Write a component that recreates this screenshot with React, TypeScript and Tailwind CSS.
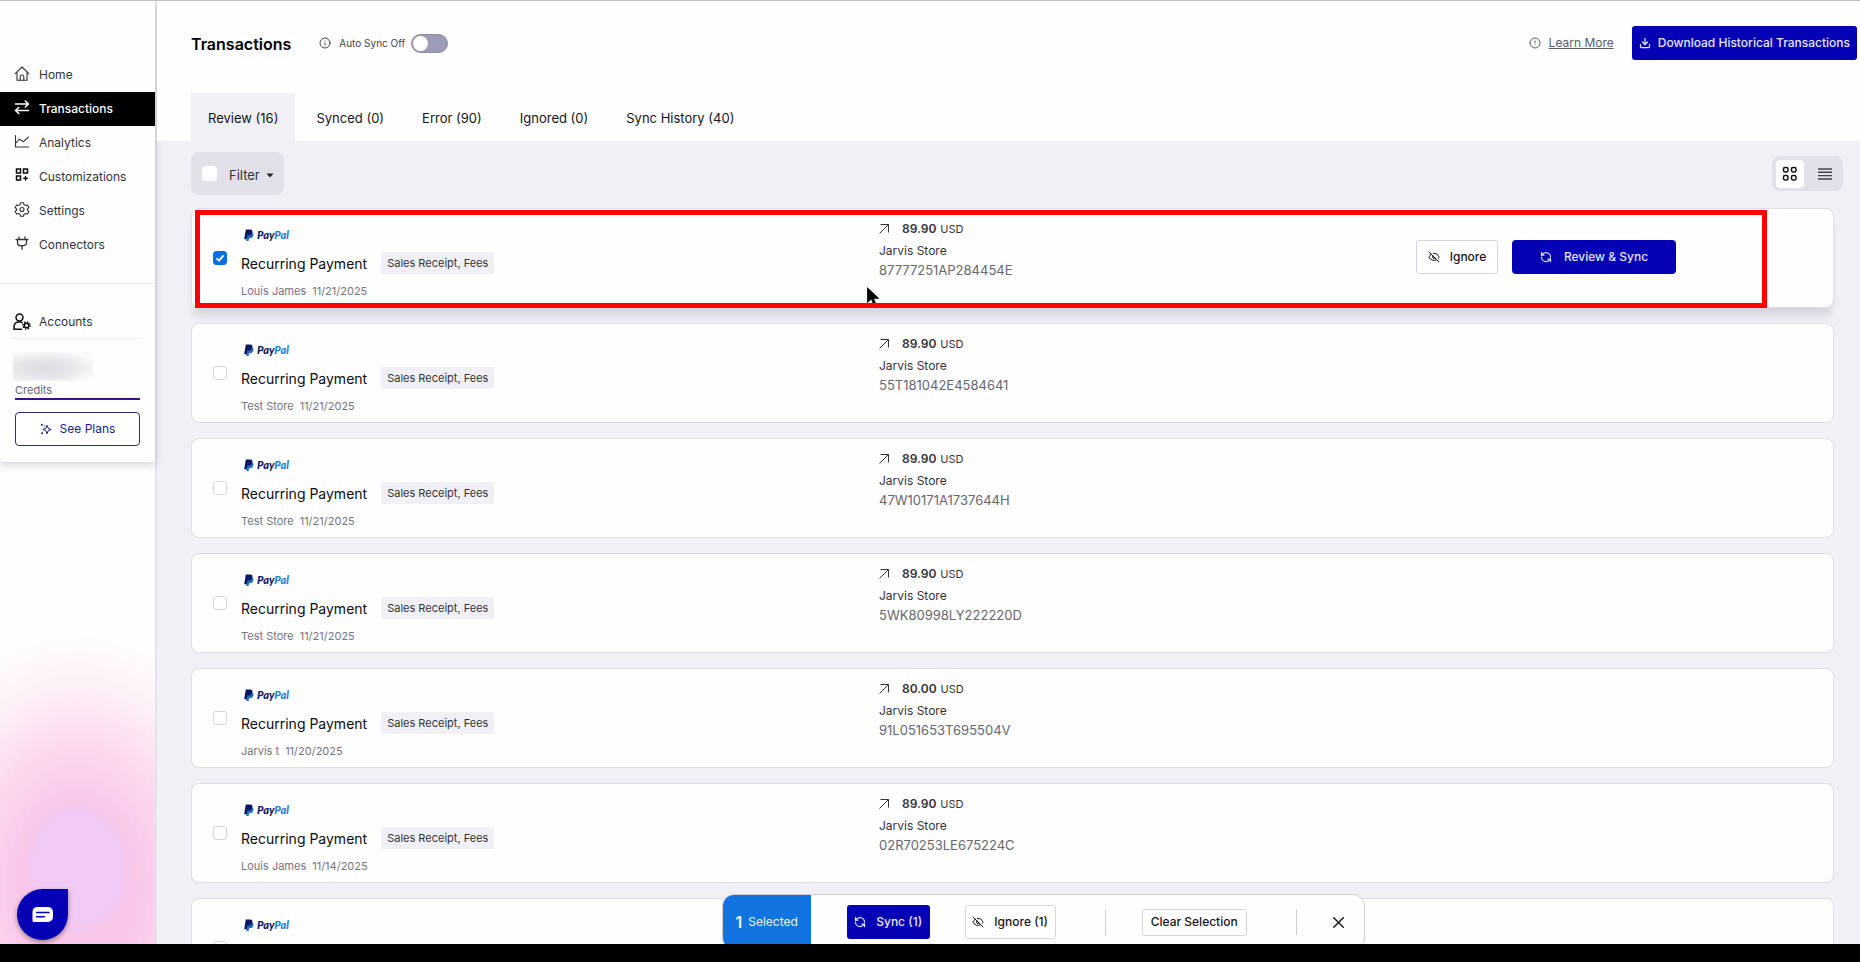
import { useState, type ReactNode } from 'react';
import { Download, EyeOff, Info, RefreshCcw, X } from 'lucide-react';

interface Transaction {
  id: string;
  title?: string;
  category?: string;
  customer?: string;
  date?: string;
  amount?: string;
  store?: string;
  reference?: string;
}

const BASE = { title: 'Recurring Payment', category: 'Sales Receipt, Fees', store: 'Jarvis Store' };

const TRANSACTIONS: Transaction[] = [
  { ...BASE, id: 't1', customer: 'Louis James', date: '11/21/2025', amount: '89.90', reference: '87777251AP284454E' },
  { ...BASE, id: 't2', customer: 'Test Store', date: '11/21/2025', amount: '89.90', reference: '55T181042E4584641' },
  { ...BASE, id: 't3', customer: 'Test Store', date: '11/21/2025', amount: '89.90', reference: '47W10171A1737644H' },
  { ...BASE, id: 't4', customer: 'Test Store', date: '11/21/2025', amount: '89.90', reference: '5WK80998LY222220D' },
  { ...BASE, id: 't5', customer: 'Jarvis t', date: '11/20/2025', amount: '80.00', reference: '91L051653T695504V' },
  { ...BASE, id: 't6', customer: 'Louis James', date: '11/14/2025', amount: '89.90', reference: '02R70253LE675224C' },
  // details not loaded yet
  { id: 't7' },
];

const TABS = ['Review (16)', 'Synced (0)', 'Error (90)', 'Ignored (0)', 'Sync History (40)'];

function Icon({ children, className }: { children: ReactNode; className: string }) {
  return (
    <svg
      viewBox="0 0 16 16"
      className={className}
      fill="none"
      stroke="currentColor"
      strokeWidth="1.1"
      strokeLinecap="round"
      strokeLinejoin="round"
      aria-hidden="true"
    >
      {children}
    </svg>
  );
}

function HomeIcon() {
  return (
    <Icon className="size-4 shrink-0">
      <path d="M1.2 7.600 8 1l6.800 6.600M3 6.400v7.800h10V6.400" />
      <path d="M6.200 14.200v-3.400a1.800 1.800 0 0 1 3.600 0v3.400" />
    </Icon>
  );
}

function TransferIcon() {
  return (
    <Icon className="size-4 shrink-0">
      <path strokeWidth="1.600" d="M1.500 4h13M11.300 1l3.200 3-3.200 3M14.500 10.500h-13M4.700 7.500l-3.200 3 3.200 3" />
    </Icon>
  );
}

function AnalyticsIcon() {
  return (
    <Icon className="size-4 shrink-0">
      <path d="M1.500 1.500v11.500h13M2 9l3.500-3.800 4 2.500 5-4.700" />
    </Icon>
  );
}

function CustomizeIcon() {
  return (
    <Icon className="size-4 shrink-0">
      <g strokeWidth="1.500" stroke="#0c0c10" strokeLinejoin="miter">
        <rect x="2.500" y="1" width="4" height="4" />
        <rect x="9.500" y="1" width="4" height="4" />
        <rect x="2.500" y="8" width="4" height="4" />
        <path d="M11.500 8.500v3.500M9.800 10.200h3.500" />
      </g>
    </Icon>
  );
}

function GearIcon() {
  return (
    <Icon className="size-4 shrink-0">
      <path d="M6.500.700h3l.5 1.900 1.500.9 1.900-.6 1.500 2.600-1.400 1.300v1.400l1.400 1.300-1.500 2.600-1.900-.6-1.500.9-.5 1.900h-3L6 12.400l-1.500-.9-1.900.6L1.100 9.500l1.400-1.300V6.800L1.100 5.500l1.500-2.600 1.900.6L6 2.600z" />
      <circle cx="8" cy="7.500" r="2" />
    </Icon>
  );
}

function PlugIcon() {
  return (
    <Icon className="size-4 shrink-0">
      <path strokeWidth="1.300" d="M2 3.500h12M5 .8v2.700M11 .8v2.700M3.500 3.500v3.200a3 3 0 0 0 3 3h3a3 3 0 0 0 3-3V3.500M8 9.700v3.500" />
    </Icon>
  );
}

function AccountsIcon() {
  return (
    <svg viewBox="0 0 18 18" className="size-[18px] shrink-0" fill="none" stroke="#0c0c10" strokeWidth="1.500" aria-hidden="true">
      <circle cx="6.500" cy="4.500" r="3.500" />
      <path d="M9 16.300H1V14c0-2.800 1.800-4.800 4.500-5h1.500c1 0 1.800.3 2.500.8" />
      <circle cx="13.500" cy="12.500" r="2.300" />
      <circle cx="13.500" cy="12.500" r="3.600" strokeDasharray="1.400 1.430" />
    </svg>
  );
}

function SparkleIcon() {
  return (
    <svg viewBox="0 0 12 12" className="size-3" fill="none" stroke="currentColor" aria-hidden="true">
      <path d="M7 2.300 8.200 5.300 11.200 6.500 8.200 7.700 7 10.700 5.800 7.700 2.800 6.500 5.800 5.300z" strokeLinejoin="round" />
      <circle cx="1.800" cy="1.800" r="1" fill="currentColor" stroke="none" />
      <circle cx="2" cy="10.300" r="1" fill="currentColor" stroke="none" />
      <circle cx="4.300" cy="2.800" r=".6" fill="currentColor" stroke="none" />
    </svg>
  );
}

function PayPalLogo() {
  return (
    <span className="flex h-3 items-center gap-[3px] pl-[3px]">
      <svg viewBox="0 0 10 12" className="h-3 w-[10px]" aria-hidden="true">
        <path d="M3.600 3.500h3.800c1.800 0 2.400 1.100 2 2.800-.4 2-1.600 3-3.500 3h-.8L4.600 12H2.200z" fill="#1f6fc0" />
        <path d="M1.800.5h4.300c1.900 0 2.700 1 2.300 2.900C8 5.500 6.700 6.500 4.700 6.500H3.400l-.6 3.800H.2z" fill="#0b1764" />
      </svg>
      <span className="font-[Lato] text-[11px] leading-3 font-black text-[#0b1764] italic">
        Pay<span className="text-[#1f7fd6]">Pal</span>
      </span>
    </span>
  );
}

function NavItem({ icon, label, active }: { icon: ReactNode; label: string; active?: boolean }) {
  return (
    <a
      href="#"
      className={
        active
          ? 'flex h-[34px] items-start gap-[9px] bg-black pt-2 pl-[14px] text-[12px] leading-[18px] font-medium text-white'
          : 'flex h-[34px] items-start gap-[9px] pt-2 pl-[14px] text-[12px] leading-[18px] text-[#33333b]'
      }
    >
      {icon}
      {label}
    </a>
  );
}

function Sidebar() {
  return (
    <aside className="flex w-[157px] shrink-0 flex-col border-r-2 border-[#e4e3ea] bg-[radial-gradient(ellipse_56px_70px_at_50%_92%,#f1caf6_0%,#f1caf6_75%,transparent_100%),radial-gradient(ellipse_190px_260px_at_50%_94%,#f9c6e7_0%,#f9c6e7_30%,#fcd9ef_55%,#fdf0f8_78%,#fefeff_100%)]">
      <div className="rounded-b-sm bg-[#fefeff] pt-[57px] pb-4 shadow-[0_3px_8px_rgba(40,40,70,0.2)]">
        <nav className="border-b border-[#ececf0] pb-[21px]">
          <NavItem icon={<HomeIcon />} label="Home" />
          <NavItem icon={<TransferIcon />} label="Transactions" active />
          <NavItem icon={<AnalyticsIcon />} label="Analytics" />
          <NavItem icon={<CustomizeIcon />} label="Customizations" />
          <NavItem icon={<GearIcon />} label="Settings" />
          <NavItem icon={<PlugIcon />} label="Connectors" />
        </nav>
        <div className="px-[13px]">
          <a href="#" className="mt-[22px] flex h-[33px] items-center gap-2 border-b border-[#f0f0f3] text-[12px] text-[#33333b]">
            <AccountsIcon />
            Accounts
          </a>
          <div className="mt-[13px] h-[29px] w-20 bg-[radial-gradient(ellipse_at_40%_55%,#dddce1_0%,#e6e5e9_40%,#fbfbfc_80%)]" />
          <div className="pr-[2px] pl-[2px]">
            <p className="h-[17px] text-[11px] leading-[18px] text-[#66666f]">Credits</p>
            <div className="h-[2px] bg-[#3c0f86]" />
            <button
              type="button"
              className="mt-3 flex h-[34px] w-full items-center justify-center gap-2 rounded border border-[#2a2f7d] bg-white text-[12px] text-[#1a1a8c]"
            >
              <SparkleIcon />
              See Plans
            </button>
          </div>
        </div>
      </div>
    </aside>
  );
}

function Header() {
  return (
    <header className="bg-[#fefeff] pl-[34px]">
      <div className="flex h-[92px] items-start pt-[25px] pr-[3px]">
        <h1 className="text-[16px] leading-9 font-semibold text-black">Transactions</h1>
        <label className="ml-7 flex h-[34px] items-center text-[10px] text-[#44444c]">
          <Info className="mr-2 size-3" strokeWidth={2} />
          Auto Sync Off
          <input type="checkbox" role="switch" className="peer sr-only" />
          <span className="ml-[6px] flex h-[19px] w-[37px] rounded-full border border-[#8d8d9a] bg-[#9c9cb9] p-px">
            <span className="size-[15px] rounded-full bg-white" />
          </span>
        </label>
        <div className="ml-auto flex items-center gap-[18px]">
          <a href="#" className="flex items-center gap-2 text-[12px] text-[#5c5c64] underline">
            <Info className="size-3 rotate-180" strokeWidth={2} />
            Learn More
          </a>
          <button
            type="button"
            className="flex h-[34px] items-center gap-[7px] rounded-[3px] bg-[#0500b4] px-[7px] text-[12px] font-medium text-[#e6e6fb]"
          >
            <Download className="size-3" strokeWidth={2.500} />
            Download Historical Transactions
          </button>
        </div>
      </div>
      <div role="tablist" className="flex gap-1">
        {TABS.map((tab, index) => (
          <button
            key={tab}
            type="button"
            role="tab"
            aria-selected={index === 0}
            className={
              index === 0
                ? 'h-12 bg-[#f1f0f6] px-[17px] pt-[3px] text-[13px] text-[#15151a]'
                : 'h-12 px-[17px] pt-[3px] text-[13px] text-[#15151a]'
            }
          >
            {tab}
          </button>
        ))}
      </div>
    </header>
  );
}

function Toolbar() {
  return (
    <div className="flex items-start justify-between pt-[11px] pr-2">
      <div className="flex h-[43px] items-center rounded-lg bg-[#e2e1e9] pr-[10px] pl-[11px]">
        <input type="checkbox" aria-label="Select all" className="size-[15px] appearance-none rounded-sm bg-white" />
        <button type="button" className="ml-3 flex items-center gap-[6px] pt-1 text-[13px] text-[#33333b]">
          Filter
          <svg viewBox="0 0 8 5" className="h-[5px] w-2" aria-hidden="true">
            <path d="M.5.500h7L4 4.500z" fill="#222" />
          </svg>
        </button>
      </div>
      <div className="mt-1 flex h-[35px] items-center rounded-lg bg-[#e2e1e9] px-1">
        <button type="button" aria-label="Card view" className="flex size-7 items-center justify-center rounded bg-white">
          <svg viewBox="0 0 16 16" className="size-4" fill="none" stroke="#111" strokeWidth="1.500" aria-hidden="true">
            <rect x="1.500" y="1.500" width="4.500" height="4.500" rx="1.400" />
            <rect x="9.500" y="1.500" width="4.500" height="4.500" rx="1.400" />
            <rect x="1.500" y="9.500" width="4.500" height="4.500" rx="1.400" />
            <rect x="9.500" y="9.500" width="4.500" height="4.500" rx="1.400" />
          </svg>
        </button>
        <button type="button" aria-label="List view" className="ml-[7px] flex size-7 items-center justify-center">
          <svg viewBox="0 0 14 12" className="h-3 w-[14px]" stroke="#44444c" strokeWidth="1.400" aria-hidden="true">
            <path d="M0 1h14M0 4.300h14M0 7.600h14M0 11h14" />
          </svg>
        </button>
      </div>
    </div>
  );
}

interface TransactionCardProps {
  transaction: Transaction;
  selected: boolean;
  onToggle: () => void;
}

function TransactionCard({ transaction, selected, onToggle }: TransactionCardProps) {
  return (
    <li
      className={
        selected
          ? 'relative z-10 grid h-[100px] grid-cols-[687fr_537fr_417fr] rounded-lg border border-[#dfdee6] bg-[#fefeff] shadow-[0_11px_8px_-3px_rgba(40,40,60,0.14)]'
          : 'grid h-[100px] grid-cols-[687fr_537fr_417fr] rounded-lg border border-[#dfdee6] bg-[#fefeff]'
      }
    >
      <div className="flex pl-[21px]">
        <span className="relative mt-[42px] flex size-[14px]">
          <input
            type="checkbox"
            aria-label="Select transaction"
            checked={selected}
            onChange={onToggle}
            className="size-[14px] appearance-none rounded-[3px] border border-[#d6d5df] bg-white checked:border-[#0b6fe0] checked:bg-[#0b6fe0]"
          />
          {selected && (
            <svg viewBox="0 0 14 14" className="pointer-events-none absolute inset-0 size-[14px]" fill="none" stroke="#fff" strokeWidth="1.800" aria-hidden="true">
              <path d="M3.500 7.300 6 9.700l4.600-5.400" />
            </svg>
          )}
        </span>
        <div className="pt-5 pl-[14px]">
          <PayPalLogo />
          {transaction.title && (
            <>
              <div className="mt-[11px] flex h-[22px] items-center gap-[14px]">
                <h2 className="text-[14px] text-[#0c0c10]">{transaction.title}</h2>
                <span className="rounded-[2px] bg-[#f1f0f6] px-[6px] text-[11px] leading-[22px] text-[#33333b]">
                  {transaction.category}
                </span>
              </div>
              <p className="mt-[9px] flex gap-[6px] text-[11px] leading-4 text-[#75757e]">
                <span>{transaction.customer}</span>
                <span>{transaction.date}</span>
              </p>
            </>
          )}
        </div>
      </div>
      {transaction.amount && (
        <div className="pt-[10px]">
          <p className="flex h-5 items-center text-[#33333b]">
            <svg viewBox="0 0 10 10" className="mr-[13px] size-[10px]" fill="none" stroke="currentColor" aria-hidden="true">
              <path d="M.5 9.500l9-9M1.500.5h8v8" />
            </svg>
            <span className="text-[12px] font-semibold">{transaction.amount}</span>
            <span className="ml-1 text-[11px]">USD</span>
          </p>
          <p className="mt-[2px] text-[12px] leading-5 text-[#33333b]">{transaction.store}</p>
          <p className="text-[13px] leading-[18px] text-[#66666f]">{transaction.reference}</p>
        </div>
      )}
      {selected && (
        <div className="flex items-center gap-[14px] pb-[2px]">
          <button
            type="button"
            className="flex h-[34px] w-[82px] items-center justify-center gap-[10px] rounded-[3px] border border-[#d6d5df] bg-white text-[12px] font-medium text-[#15151a]"
          >
            <EyeOff className="size-3" />
            Ignore
          </button>
          <button
            type="button"
            className="flex h-[34px] w-[164px] items-center justify-center gap-3 rounded bg-[#0500b4] text-[12px] font-medium text-[#e6e6fb]"
          >
            <RefreshCcw className="size-3" strokeWidth={2.500} />
            Review &amp; Sync
          </button>
        </div>
      )}
      {selected && (
        <>
          <svg viewBox="0 0 18 28" className="absolute top-[75px] left-[41%] h-7 w-[18px]" aria-hidden="true">
            <path d="M1.500 1.500v19l4.500-4 3.500 9 4-1.700-3.500-8.500h6z" fill="#000" stroke="#fff" strokeWidth="1.200" />
          </svg>
          <div className="pointer-events-none absolute top-px right-[66px] -bottom-px left-[3px] border-5 border-[#ff0000]" />
        </>
      )}
    </li>
  );
}

function SelectionBar({ count, onClear }: { count: number; onClear: () => void }) {
  return (
    <div className="absolute -bottom-[6px] left-[38.8%] z-20 flex h-14 items-center overflow-hidden rounded-xl border border-[#d0d0d8] bg-[#fefeff] pr-4 text-[12px] text-[#15151a]">
      <p className="flex h-full w-[88px] items-center justify-center gap-[6px] bg-[#1274e0] text-[#eef5ff]">
        <span className="text-[16px] font-semibold">{count}</span>
        Selected
      </p>
      <button
        type="button"
        className="ml-9 flex h-[34px] w-[83px] items-center justify-center gap-[10px] rounded-[3px] bg-[#0500b4] font-medium text-[#e6e6fb]"
      >
        <RefreshCcw className="size-3" strokeWidth={2.500} />
        Sync ({count})
      </button>
      <button
        type="button"
        className="ml-[35px] flex h-[34px] w-[91px] items-center justify-center gap-[10px] rounded-[3px] border border-[#d6d5df] bg-white font-medium"
      >
        <EyeOff className="size-3" />
        Ignore ({count})
      </button>
      <span className="ml-[49px] h-[26px] w-px bg-[#cfced8]" />
      <button
        type="button"
        onClick={onClear}
        className="ml-9 h-[27px] w-[105px] rounded-[3px] border border-[#d6d5df] bg-white font-medium whitespace-nowrap"
      >
        Clear Selection
      </button>
      <span className="ml-[49px] h-[26px] w-px bg-[#cfced8]" />
      <button type="button" aria-label="Close" onClick={onClear} className="ml-8">
        <X className="size-[19px]" strokeWidth={1.800} />
      </button>
    </div>
  );
}

export default function App() {
  const [selectedIds, setSelectedIds] = useState<Set<string>>(new Set(['t1']));

  const toggle = (id: string) => {
    setSelectedIds((current) => {
      const next = new Set(current);
      if (next.has(id)) {
        next.delete(id);
      } else {
        next.add(id);
      }
      return next;
    });
  };

  return (
    <div className="h-screen bg-black pb-[18px] font-[Inter,sans-serif]">
      <div className="relative flex h-full overflow-hidden border-t border-[#bdbdc2] bg-[#f1f0f6]">
        <Sidebar />
        <main className="min-w-0 flex-1">
          <Header />
          <div className="pr-[9px] pl-[34px]">
            <Toolbar />
            <ul className="mt-[13px] flex flex-col gap-[15px] pr-[17px]">
              {TRANSACTIONS.map((transaction) => (
                <TransactionCard
                  key={transaction.id}
                  transaction={transaction}
                  selected={selectedIds.has(transaction.id)}
                  onToggle={() => toggle(transaction.id)}
                />
              ))}
            </ul>
          </div>
        </main>
        {selectedIds.size > 0 && <SelectionBar count={selectedIds.size} onClear={() => setSelectedIds(new Set())} />}
        <button
          type="button"
          aria-label="Open chat"
          className="absolute bottom-1 left-[17px] z-20 flex size-[51px] items-center justify-center rounded-full rounded-tr-md bg-[#0500b4] shadow-[0_2px_5px_rgba(0,0,0,0.4)]"
        >
          <svg viewBox="0 0 22 16" className="h-4 w-[22px]" aria-hidden="true">
            <path d="M5 0h11a5 5 0 0 1 5 5v5a5 5 0 0 1-5 5H2a1.500 1.500 0 0 1-1.500-1.500V5A5 5 0 0 1 5 0z" fill="#fff" />
            <path d="M4.500 5.500h12.500M4.500 9.800h8" stroke="#0500b4" strokeWidth="1.400" strokeLinecap="round" />
          </svg>
        </button>
      </div>
    </div>
  );
}
